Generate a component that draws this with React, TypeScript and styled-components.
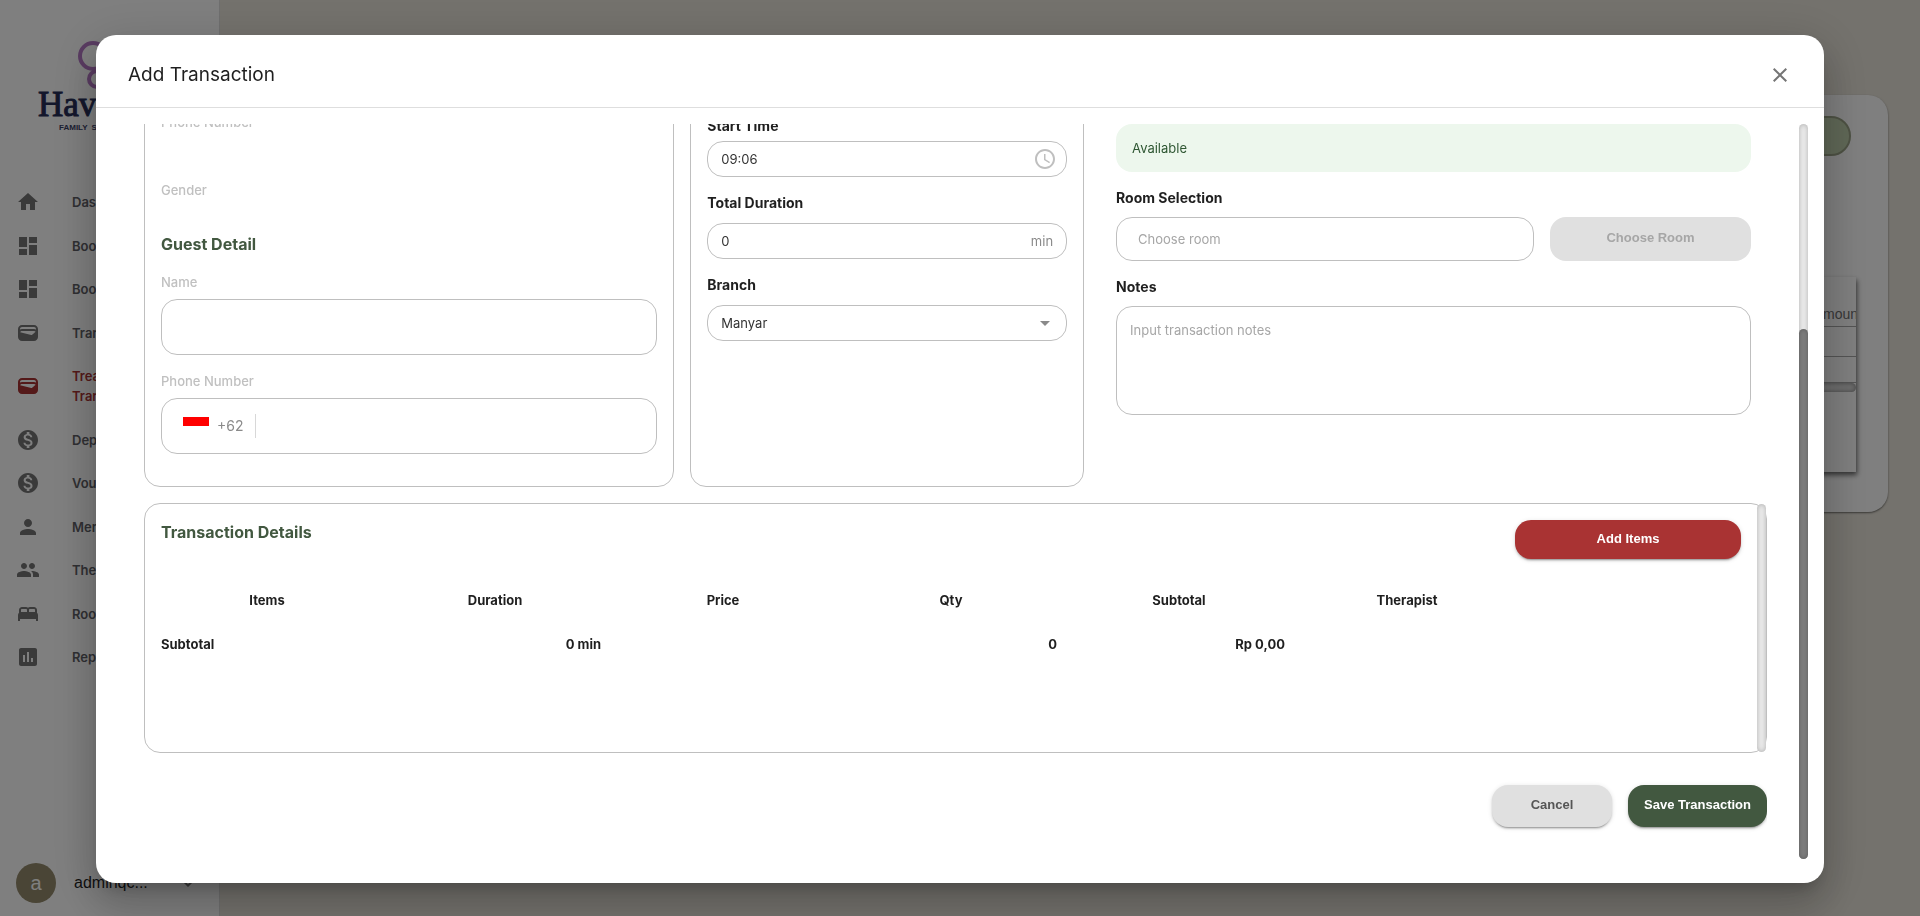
import React, { useLayoutEffect, useRef, useState } from 'react';
import styled, { createGlobalStyle, css } from 'styled-components';
import {
  MdAccessTime,
  MdArrowDropDown,
  MdAssessment,
  MdBed,
  MdClose,
  MdDashboard,
  MdHome,
  MdKeyboardArrowDown,
  MdMonetizationOn,
  MdPeople,
  MdPerson,
  MdWallet,
} from 'react-icons/md';

const color = {
  line: '#bfbfbf',
  label: '#c0c0c0',
  text: '#1f1f1f',
  muted: '#8a8a8a',
  placeholder: '#a6a6a6',
  green: '#425840',
  red: '#a93333',
};

const GlobalStyle = createGlobalStyle`
  * { box-sizing: border-box; }
  body {
    margin: 0;
    background: #e8e4da;
    color: ${color.text};
    font: 400 13px/20px Inter, "Liberation Sans", sans-serif;
  }
  button, input, select, textarea { font: inherit; color: inherit; }
`;

/* ---------- page behind the dialog ---------- */

const Page = styled.div`
  display: flex;
  height: 100vh;
  overflow: hidden;
`;

const Sidebar = styled.aside`
  display: flex;
  flex-direction: column;
  flex: 0 0 220px;
  padding: 36px 16px 13px;
  background: #fff;
  border-right: 1px solid #dedede;
`;

const Logo = styled.svg`
  display: block;
  width: 144px;
  height: 100px;
  margin-left: 20px;
`;

const Nav = styled.nav`
  display: flex;
  flex-direction: column;
  justify-content: space-between;
  flex: 0 0 475px;
  margin-top: 56px;
`;

const NavLink = styled.a<{ $active?: boolean }>`
  display: flex;
  align-items: center;
  gap: 32px;
  height: ${(p) => (p.$active ? 40 : 20)}px;
  color: ${(p) => (p.$active ? color.red : '#606066')};
  font-weight: 600;
  text-decoration: none;

  svg {
    flex: none;
    color: ${(p) => (p.$active ? color.red : '#757575')};
  }
`;

const Account = styled.div`
  display: flex;
  align-items: center;
  gap: 18px;
  margin-top: auto;
  font: 400 16px/20px "Liberation Sans", Arial, sans-serif;

  svg {
    margin-left: 28px;
    color: #757575;
  }
`;

const Avatar = styled.span`
  display: grid;
  place-items: center;
  width: 40px;
  height: 40px;
  border-radius: 50%;
  background: #948a6c;
  color: #fff;
  font-size: 20px;
`;

const AccountMenu = styled.span`
  display: flex;
  align-items: center;
`;

const Main = styled.main`
  flex: 1;
  min-width: 0;
  padding: 95px 32px 0;
`;

const ListCard = styled.section`
  display: flex;
  flex-direction: column;
  height: 417px;
  padding: 21px 32px 40px;
  border-radius: 20px;
  background: #fff;
  box-shadow: 0 1px 2px rgba(0, 0, 0, 0.5);
`;

const NewButton = styled.button`
  align-self: flex-end;
  width: 200px;
  height: 40px;
  margin-right: 5px;
  border: 2px solid #9ca488;
  border-radius: 20px;
  background: #c0d0ae;
`;

const ListPanel = styled.div`
  flex: 1;
  margin-top: 121px;
  overflow: hidden;
  box-shadow: 1px 3px 5px rgba(0, 0, 0, 0.6);
`;

const ListTable = styled.table`
  width: calc(100% + 20px);
  border-collapse: collapse;

  th {
    height: 49px;
    padding: 0 14px 2px 0;
    vertical-align: bottom;
    text-align: right;
    font: 400 14px/20px "Liberation Sans", Arial, sans-serif;
    color: #707070;
  }
  td { height: 30px; }
  tr { border-bottom: 1px solid #a8a8a8; }
  tbody tr:last-child td { height: 26px; }
`;

const SideScroll = styled.div`
  height: 9px;
  border-radius: 5px;
  background: #dedede;
  box-shadow: inset 0 0 5px rgba(0, 0, 0, 0.4);
`;

/* ---------- dialog ---------- */

const Backdrop = styled.div`
  position: fixed;
  inset: 0;
  display: flex;
  justify-content: center;
  padding: 35px 0 33px;
  background: rgba(0, 0, 0, 0.5);
`;

const Dialog = styled.section`
  display: flex;
  flex-direction: column;
  width: 90%;
  border-radius: 20px;
  background: #fff;
  box-shadow:
    0 11px 15px -7px rgba(0, 0, 0, 0.2),
    0 24px 38px 3px rgba(0, 0, 0, 0.14),
    0 9px 46px 8px rgba(0, 0, 0, 0.12);
`;

const DialogHeader = styled.header`
  display: flex;
  align-items: center;
  justify-content: space-between;
  flex: 0 0 73px;
  padding: 8px 32px 0;
  border-bottom: 1px solid #dedede;
`;

const DialogTitle = styled.h2`
  margin: 0;
  font-size: 19px;
  line-height: 32px;
  font-weight: 400;
`;

const IconButton = styled.button`
  display: grid;
  padding: 0;
  border: 0;
  background: none;
  color: #757575;
  cursor: pointer;
`;

const DialogBody = styled.div`
  display: flex;
  gap: 32px;
  flex: 1;
  min-height: 0;
  padding: 16px 16px 24px 48px;
`;

const ScrollArea = styled.div`
  flex: 1;
  min-width: 0;
  overflow-y: auto;
  scrollbar-width: none;
`;

const ScrollTrack = styled.div`
  flex: 0 0 9px;
  border-radius: 5px;
  background: #eaeaea;
  box-shadow: inset 0 0 5px rgba(0, 0, 0, 0.25);
`;

const ScrollThumb = styled.div`
  border-radius: 5px;
  background: #7c7c7c;
  box-shadow: inset 0 0 4px rgba(0, 0, 0, 0.25);
`;

const Form = styled.form`
  display: flex;
  flex-direction: column;
  padding-bottom: 32px;
`;

const Columns = styled.div`
  display: grid;
  grid-template-columns: repeat(12, minmax(0, 1fr));
  gap: 16px;
  min-height: 648px;
`;

const outlined = css`
  border: 1px solid ${color.line};
  border-radius: 16px;
`;

const GuestCard = styled.div`
  ${outlined}
  grid-column: span 4;
  display: flex;
  flex-direction: column;
  justify-content: flex-end;
  padding: 16px 16px 32px;
`;

const ScheduleCard = styled.div`
  ${outlined}
  grid-column: span 3;
  display: flex;
  flex-direction: column;
  gap: 16px;
  padding: 276px 16px 16px;
`;

const RoomColumn = styled.div`
  grid-column: span 5;
  display: flex;
  flex-direction: column;
  gap: 16px;
  padding: 285px 16px 0;
`;

const SectionTitle = styled.h3`
  margin: 0;
  color: ${color.green};
  font-size: 16px;
  line-height: 24px;
  font-weight: 700;
`;

const GuestTitle = styled(SectionTitle)`
  margin: 32px 0 16px;
`;

const MemberLabel = styled.span`
  color: ${color.label};
  font-weight: 500;

  & + & { margin-top: 48px; }
`;

const GuestField = styled.div`
  display: flex;
  flex-direction: column;
  gap: 7px;

  & + & { margin-top: 16px; }

  label {
    color: ${color.label};
    font-weight: 500;
  }
`;

const GuestInput = styled.input`
  ${outlined}
  width: 100%;
  height: 56px;
  padding: 0 16px;
  background: none;
`;

const PhoneBox = styled.div`
  ${outlined}
  display: flex;
  align-items: center;
  gap: 8px;
  height: 56px;
  padding: 0 21px;
`;

const Flag = styled.svg`
  width: 26px;
  height: 18px;
`;

const DialCode = styled.span`
  color: ${color.muted};
  font-size: 14px;
`;

const PhoneInput = styled.input`
  flex: 1;
  min-width: 0;
  height: 24px;
  margin-left: 4px;
  padding: 0 8px;
  border: 0;
  border-left: 1px solid #d8d8d8;
  background: none;
`;

const Field = styled.div<{ $gap: number }>`
  display: flex;
  flex-direction: column;
  gap: ${(p) => p.$gap}px;

  label {
    font-size: 14px;
    font-weight: 700;
  }
`;

const ControlBox = styled.div<{ $end: number }>`
  ${outlined}
  display: flex;
  align-items: center;
  height: 36px;
  padding-right: ${(p) => p.$end}px;
  color: ${color.muted};

  input, select {
    flex: 1;
    min-width: 0;
    height: 100%;
    padding: 0 0 0 13px;
    border: 0;
    background: none;
    color: #333;
    appearance: none;
  }
`;

const ClockIcon = styled(MdAccessTime)`
  color: ${color.line};
`;

const Alert = styled.div`
  height: 48px;
  padding: 14px 16px;
  border-radius: 16px;
  background: #edf7ed;
  color: #2f5733;
`;

const RoomRow = styled.div`
  display: grid;
  grid-template-columns: repeat(12, minmax(0, 1fr));
  gap: 16px;
`;

const RoomInput = styled.input`
  ${outlined}
  grid-column: span 8;
  height: 44px;
  padding: 0 21px;

  &::placeholder { color: ${color.placeholder}; }
`;

const NotesInput = styled.textarea`
  ${outlined}
  display: block;
  width: 100%;
  height: 109px;
  padding: 13px;
  resize: none;

  &::placeholder { color: ${color.placeholder}; }
`;

const Button = styled.button<{ $tone: 'red' | 'green' | 'grey' }>`
  padding: 0 16px 2px;
  border: 0;
  border-radius: 16px;
  background: ${(p) => (p.$tone === 'grey' ? '#e0e0e0' : color[p.$tone])};
  color: ${(p) => (p.$tone === 'grey' ? '#555' : '#fff')};
  font: 700 13px/20px "Liberation Sans", Arial, sans-serif;
  white-space: nowrap;
  cursor: pointer;
  box-shadow:
    0 3px 1px -2px rgba(0, 0, 0, 0.2),
    0 2px 2px rgba(0, 0, 0, 0.14),
    0 1px 5px rgba(0, 0, 0, 0.12);

  &:disabled {
    color: #a6a6a6;
    box-shadow: none;
    cursor: default;
  }
`;

const RoomButton = styled(Button)`
  grid-column: span 4;
`;

const DetailsCard = styled.section`
  ${outlined}
  display: flex;
  min-height: 250px;
  margin-top: 16px;
`;

const DetailsContent = styled.div`
  flex: 1;
  min-width: 0;
  padding: 16px;
`;

const DetailsHeader = styled.div`
  display: flex;
  align-items: flex-start;
  justify-content: space-between;
  margin-bottom: 19px;
`;

const AddItemsButton = styled(Button)`
  width: 226px;
  height: 39px;
`;

const ItemsTable = styled.table`
  width: calc(100% + 16px);
  margin: 0 -8px;
  border-collapse: collapse;
  table-layout: fixed;

  th, td {
    height: 44px;
    padding: 0 8px;
    font-weight: 700;
    text-align: right;
  }
  thead th { text-align: center; }
  tbody th { text-align: left; }
`;

const Actions = styled.footer`
  display: flex;
  justify-content: flex-end;
  gap: 16px;
  margin-top: 32px;
`;

const ActionButton = styled(Button)`
  min-width: 120px;
  height: 42px;
`;

const navItems = [
  { label: 'Dashboard', icon: MdHome },
  { label: 'Booking', icon: MdDashboard },
  { label: 'Booking', icon: MdDashboard },
  { label: 'Transaction', icon: MdWallet },
  { label: 'Treatment Transaction', icon: MdWallet, active: true },
  { label: 'Deposit', icon: MdMonetizationOn },
  { label: 'Voucher', icon: MdMonetizationOn },
  { label: 'Member', icon: MdPerson },
  { label: 'Therapist', icon: MdPeople },
  { label: 'Room', icon: MdBed },
  { label: 'Report', icon: MdAssessment },
];

const itemColumns = ['Items', 'Duration', 'Price', 'Qty', 'Subtotal', 'Therapist', ''];

function Background() {
  return (
    <Page>
      <Sidebar>
        <Logo viewBox="0 0 144 100" role="img" aria-label="Haven Family Spa">
          <g fill="none" stroke="#b478c4" strokeWidth="4">
            <circle cx="57" cy="20" r="13" />
            <circle cx="61" cy="43" r="8" />
          </g>
          <text
            x="2"
            y="80"
            fontFamily="Liberation Serif, serif"
            fontSize="35"
            fill="#262e58"
            stroke="#262e58"
            strokeWidth="1"
          >
            Haven
          </text>
          <text x="23" y="94" fontFamily="Liberation Sans, sans-serif" fontSize="8" fontWeight="700" fill="#3a4166">
            FAMILY
            <tspan dx="4">SPA</tspan>
          </text>
        </Logo>
        <Nav>
          {navItems.map(({ label, icon: Icon, active }, i) => (
            <NavLink key={i} href="#" $active={active}>
              <Icon size={24} />
              {label}
            </NavLink>
          ))}
        </Nav>
        <Account>
          <Avatar>a</Avatar>
          <AccountMenu>
            adminqc...
            <MdKeyboardArrowDown size={24} />
          </AccountMenu>
        </Account>
      </Sidebar>
      <Main>
        <ListCard>
          <NewButton aria-label="Add" />
          <ListPanel>
            <ListTable>
              <thead>
                <tr><th>Amount</th></tr>
              </thead>
              <tbody>
                <tr><td /></tr>
                <tr><td /></tr>
              </tbody>
            </ListTable>
            <SideScroll />
          </ListPanel>
        </ListCard>
      </Main>
    </Page>
  );
}

export default function App() {
  const area = useRef<HTMLDivElement>(null);
  const [thumb, setThumb] = useState({ top: 0, height: 100 });

  const measure = () => {
    const el = area.current;
    if (!el) return;
    setThumb({
      top: (el.scrollTop / el.scrollHeight) * el.clientHeight,
      height: (el.clientHeight / el.scrollHeight) * 100,
    });
  };

  useLayoutEffect(() => {
    const toEnd = () => {
      if (area.current) area.current.scrollTop = area.current.scrollHeight;
      measure();
    };
    toEnd();
    window.addEventListener('resize', toEnd);
    return () => window.removeEventListener('resize', toEnd);
  }, []);

  return (
    <>
      <GlobalStyle />
      <Background />
      <Backdrop>
        <Dialog role="dialog" aria-labelledby="dialog-title">
          <DialogHeader>
            <DialogTitle id="dialog-title">Add Transaction</DialogTitle>
            <IconButton aria-label="Close">
              <MdClose size={24} />
            </IconButton>
          </DialogHeader>
          <DialogBody>
            <ScrollArea ref={area} onScroll={measure}>
              <Form onSubmit={(e) => e.preventDefault()}>
                <Columns>
                  <GuestCard>
                    <MemberLabel>Phone Number</MemberLabel>
                    <MemberLabel>Gender</MemberLabel>
                    <GuestTitle>Guest Detail</GuestTitle>
                    <GuestField>
                      <label htmlFor="guest-name">Name</label>
                      <GuestInput id="guest-name" />
                    </GuestField>
                    <GuestField>
                      <label htmlFor="guest-phone">Phone Number</label>
                      <PhoneBox>
                        <Flag viewBox="0 0 26 18" aria-hidden="true">
                          <rect width="26" height="18" fill="#fff" />
                          <rect width="26" height="9" fill="#f00" />
                        </Flag>
                        <DialCode>+62</DialCode>
                        <PhoneInput id="guest-phone" type="tel" />
                      </PhoneBox>
                    </GuestField>
                  </GuestCard>

                  <ScheduleCard>
                    <Field $gap={5}>
                      <label htmlFor="start">Start Time</label>
                      <ControlBox $end={9}>
                        <input id="start" defaultValue="09:06" />
                        <ClockIcon size={24} />
                      </ControlBox>
                    </Field>
                    <Field $gap={10}>
                      <label htmlFor="duration">Total Duration</label>
                      <ControlBox $end={13}>
                        <input id="duration" defaultValue="0" />
                        min
                      </ControlBox>
                    </Field>
                    <Field $gap={10}>
                      <label htmlFor="branch">Branch</label>
                      <ControlBox $end={9}>
                        <select id="branch">
                          <option>Manyar</option>
                        </select>
                        <MdArrowDropDown size={24} />
                      </ControlBox>
                    </Field>
                  </ScheduleCard>

                  <RoomColumn>
                    <Alert role="status">Available</Alert>
                    <Field $gap={9}>
                      <label htmlFor="room">Room Selection</label>
                      <RoomRow>
                        <RoomInput id="room" placeholder="Choose room" />
                        <RoomButton type="button" $tone="grey" disabled>
                          Choose Room
                        </RoomButton>
                      </RoomRow>
                    </Field>
                    <Field $gap={9}>
                      <label htmlFor="notes">Notes</label>
                      <NotesInput id="notes" placeholder="Input transaction notes" />
                    </Field>
                  </RoomColumn>
                </Columns>

                <DetailsCard>
                  <DetailsContent>
                    <DetailsHeader>
                      <SectionTitle>Transaction Details</SectionTitle>
                      <AddItemsButton type="button" $tone="red">
                        Add Items
                      </AddItemsButton>
                    </DetailsHeader>
                    <ItemsTable>
                      <thead>
                        <tr>
                          {itemColumns.map((name) => (
                            <th key={name} scope="col">{name}</th>
                          ))}
                        </tr>
                      </thead>
                      <tbody>
                        <tr>
                          <th scope="row">Subtotal</th>
                          <td>0 min</td>
                          <td />
                          <td>0</td>
                          <td>Rp 0,00</td>
                          <td />
                          <td />
                        </tr>
                      </tbody>
                    </ItemsTable>
                  </DetailsContent>
                  <ScrollTrack />
                </DetailsCard>

                <Actions>
                  <ActionButton type="button" $tone="grey">Cancel</ActionButton>
                  <ActionButton type="submit" $tone="green">Save Transaction</ActionButton>
                </Actions>
              </Form>
            </ScrollArea>
            <ScrollTrack>
              <ScrollThumb style={{ marginTop: thumb.top, height: `${thumb.height}%` }} />
            </ScrollTrack>
          </DialogBody>
        </Dialog>
      </Backdrop>
    </>
  );
}
